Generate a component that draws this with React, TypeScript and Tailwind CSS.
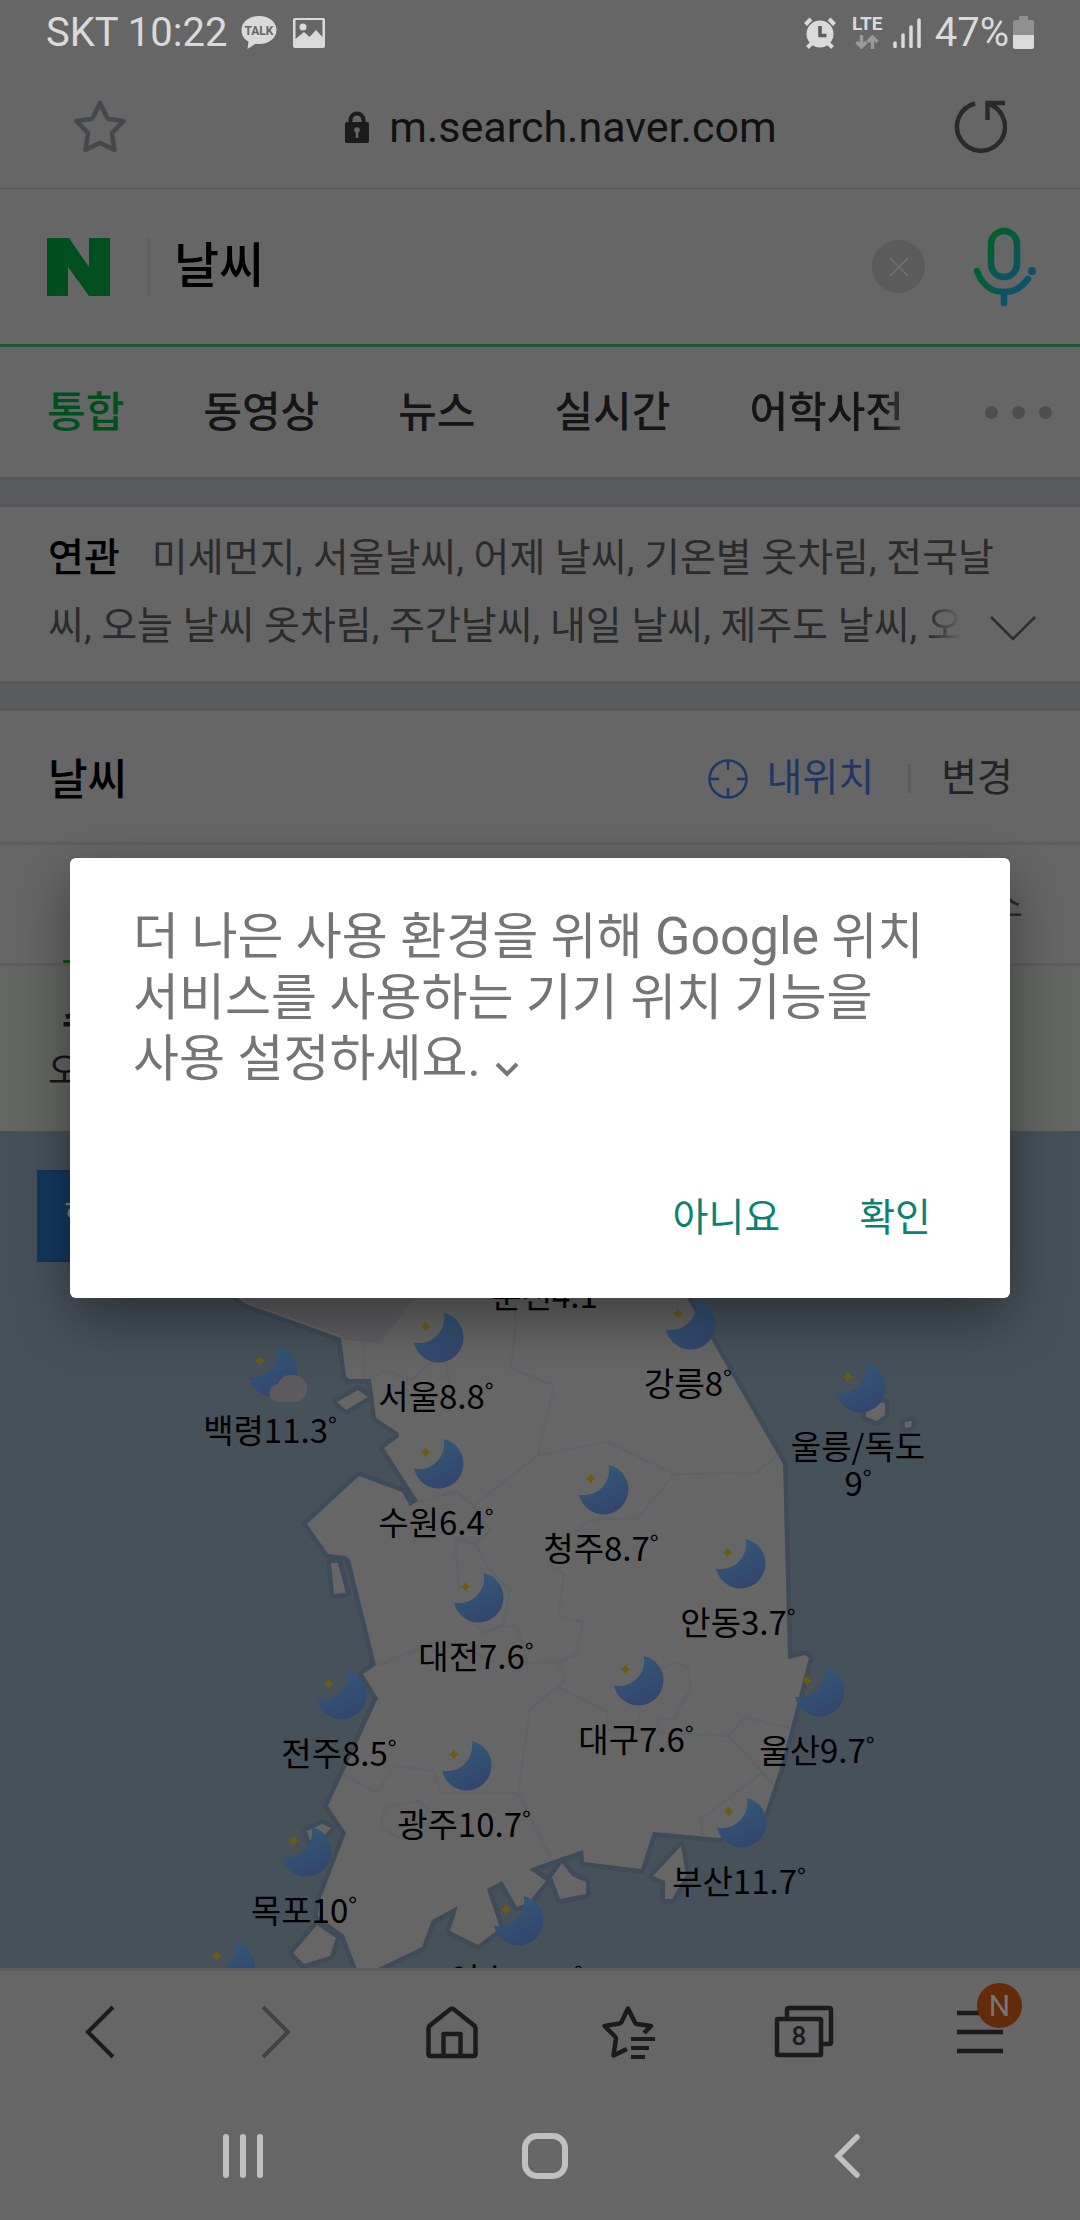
import React from "react";

type City = {
  name: string;
  temp: string;
  x: number;
  y: number;
  cloudy?: boolean;
  stacked?: boolean;
};

const MAP_TOP = 1131;

const cities: City[] = [
  { name: "춘천", temp: "4.1", x: 549, y: 1212 },
  { name: "강릉", temp: "8", x: 688, y: 1300 },
  { name: "서울", temp: "8.8", x: 436, y: 1313 },
  { name: "백령", temp: "11.3", x: 270, y: 1347, cloudy: true },
  { name: "울릉/독도", temp: "9", x: 858, y: 1363, stacked: true },
  { name: "수원", temp: "6.4", x: 436, y: 1439 },
  { name: "청주", temp: "8.7", x: 601, y: 1465 },
  { name: "안동", temp: "3.7", x: 738, y: 1539 },
  { name: "대전", temp: "7.6", x: 476, y: 1573 },
  { name: "대구", temp: "7.6", x: 636, y: 1656 },
  { name: "울산", temp: "9.7", x: 817, y: 1667 },
  { name: "전주", temp: "8.5", x: 339, y: 1670 },
  { name: "광주", temp: "10.7", x: 464, y: 1741 },
  { name: "부산", temp: "11.7", x: 739, y: 1798 },
  { name: "목포", temp: "10", x: 304, y: 1827 },
  { name: "여수", temp: "11.8", x: 516, y: 1896 },
  { name: "흑산", temp: "12", x: 227, y: 1942 },
];

function StatusBar() {
  return (
    <div className="flex h-16 items-center pl-[46px] pr-[46px] pt-px text-[40px] leading-none text-[#dadada]">
      <span>SKT 10:22</span>
      <svg className="ml-[14px] h-9 w-9" viewBox="0 0 36 36">
        <path
          d="M18 1C8 1 .5 7 .5 15c0 5.600 3 9.400 7 11.500L6.500 34l8-5.200 3.500.2c10 0 17.500-6 17.500-14S28 1 18 1z"
          fill="#dadada"
        />
        <text x="18" y="20" textAnchor="middle" fontSize="12" fontWeight="700" fill="#666666">
          TALK
        </text>
      </svg>
      <svg className="ml-4 h-[30px] w-8" viewBox="0 0 32 30">
        <path
          fillRule="evenodd"
          d="M2 0h28a2 2 0 0 1 2 2v26a2 2 0 0 1-2 2H2a2 2 0 0 1-2-2V2a2 2 0 0 1 2-2zM2.500 2v19l8.500-7 5.500 5L23 12l6.500 7V2z"
          fill="#dadada"
        />
        <circle cx="10" cy="9" r="3.500" fill="#dadada" />
      </svg>
      <div className="ml-auto flex items-center">
        <svg className="h-8 w-8" viewBox="0 0 32 32">
          <circle cx="16" cy="17" r="13.500" fill="#dadada" />
          <path d="M1.500 7.500L7 2M30.500 7.500L25 2" stroke="#dadada" strokeWidth="4" />
          <path d="M8 26l-4.500 4.500M24 26l4.500 4.500" stroke="#dadada" strokeWidth="4" />
          <path d="M16 9v9.500h6.500" stroke="#5b5b5b" strokeWidth="3.500" fill="none" />
        </svg>
        <div className="ml-4 flex w-[31px] flex-col items-center gap-1 text-[19px] font-bold leading-[15px]">
          <span>LTE</span>
          <svg className="h-[14px] w-6" viewBox="0 0 24 14">
            <path d="M6.500 0v11M1.500 7l5 5 5-5M17.500 14V3M12.500 7l5-5 5 5" stroke="#999999" strokeWidth="3.500" fill="none" />
          </svg>
        </div>
        <svg className="ml-[10px] h-[30px] w-7" viewBox="0 0 28 30">
          <path d="M2 25v3.500M10 17v11.500M18 9v19.500M26 2v26.500" stroke="#dadada" strokeWidth="3.500" strokeLinecap="round" />
        </svg>
        <span className="ml-[14px]">47%</span>
        <svg className="ml-1 h-[33px] w-[21px]" viewBox="0 0 21 33">
          <path d="M6 0h9v4h4a2 2 0 0 1 2 2v13H0V6a2 2 0 0 1 2-2h4z" fill="#8f8f8f" />
          <path d="M0 19h21v12a2 2 0 0 1-2 2H2a2 2 0 0 1-2-2z" fill="#dadada" />
        </svg>
      </div>
    </div>
  );
}

function AddressBar() {
  return (
    <div className="flex h-[125px] items-center border-b border-[#555555] px-[73px]">
      <button type="button" aria-label="즐겨찾기">
        <svg className="h-[54px] w-[54px]" viewBox="0 0 54 54" fill="none" stroke="#444848" strokeWidth="4.500" strokeLinejoin="round">
          <path d="M27 4l7 14.500c.5 1 1 1.400 2 1.600L50.500 22 40 33c-.8.800-1 1.500-.9 2.500L41.500 51 28.500 44.500c-1-.5-2-.5-3 0L12.500 51l2.400-15.500c.1-1-.1-1.700-.9-2.500L3.500 22 18 20.100c1-.2 1.500-.6 2-1.600z" />
        </svg>
      </button>
      <div className="flex flex-1 items-center justify-center gap-5 pl-[42px] pt-[2px]">
        <svg className="h-8 w-6" viewBox="0 0 24 32">
          <rect x="0" y="11" width="24" height="21" rx="2" fill="#1c1c1c" />
          <path d="M5.500 12V9a6.500 6.500 0 0 1 13 0v3" stroke="#1c1c1c" strokeWidth="4" fill="none" />
          <circle cx="12" cy="19" r="2.800" fill="#666666" />
          <path d="M12 20v7" stroke="#666666" strokeWidth="2.500" />
        </svg>
        <span className="text-[43px] leading-none text-[#111111]">m.search.naver.com</span>
      </div>
      <button type="button" aria-label="새로고침">
        <svg className="h-[54px] w-[54px]" viewBox="0 0 54 54" fill="none" stroke="#2a2a2a" strokeWidth="4.500">
          <path d="M22 4.500A24 24 0 1 0 37 5.500M34.500 21V4H52" />
        </svg>
      </button>
    </div>
  );
}

function SearchBar() {
  return (
    <form className="flex h-[158px] items-center border-b-[3px] border-[#1c5638] pl-[47px] pr-[43px]">
      <svg className="h-[58px] w-[63px] shrink-0" viewBox="0 0 63 58" role="img" aria-label="NAVER">
        <path d="M0 0h22l20 29V0h21v58H42L21 29v29H0z" fill="#00501f" />
      </svg>
      <span className="ml-[37px] h-[57px] w-[3px] shrink-0 bg-[#5f5f5f]" />
      <input
        aria-label="검색어"
        defaultValue="날씨"
        className="ml-6 min-w-0 flex-1 bg-transparent text-[49px] font-medium leading-[72px] text-black outline-none"
      />
      <button type="button" aria-label="지우기" className="flex h-[53px] w-[53px] items-center justify-center rounded-full bg-[#5b5b5b]">
        <svg className="h-5 w-5" viewBox="0 0 20 20" stroke="#6d6d6d" strokeWidth="2">
          <path d="M1 1l18 18M19 1L1 19" />
        </svg>
      </button>
      <button type="button" aria-label="음성 검색" className="ml-12">
        <svg className="h-20 w-16" viewBox="0 0 64 80" fill="none" strokeWidth="6.500" strokeLinecap="round">
          <defs>
            <linearGradient id="mic" gradientUnits="userSpaceOnUse" x1="12" y1="14" x2="48" y2="46">
              <stop offset="0" stopColor="#00602a" />
              <stop offset="1" stopColor="#0c5366" />
            </linearGradient>
            <linearGradient id="micArc" gradientUnits="userSpaceOnUse" x1="4" y1="44" x2="44" y2="60">
              <stop offset="0" stopColor="#00602f" />
              <stop offset="1" stopColor="#0c5366" />
            </linearGradient>
          </defs>
          <rect x="18" y="4" width="26" height="46" rx="13" stroke="url(#mic)" />
          <path d="M4 44C9 58 19 65 31 65c10 0 18-5 24-13" stroke="url(#micArc)" />
          <path d="M31 66v10" stroke="#0c5366" />
          <circle cx="59" cy="44" r="4" fill="#0c5366" />
        </svg>
      </button>
    </form>
  );
}

function CategoryTabs() {
  const tabs = ["동영상", "뉴스", "실시간"];
  return (
    <nav className="flex h-[130px] items-center whitespace-nowrap pl-[47px] pr-7 pt-px text-[42px] font-medium leading-[64px] text-[#151515]">
      <div className="flex flex-1 gap-[79px]">
        <a href="#all" className="text-[#00501f]">통합</a>
        {tabs.map((t) => (
          <a key={t} href={"#" + t}>{t}</a>
        ))}
        <a href="#dict" className="bg-linear-to-r from-[#151515] from-85% to-[#3a3a3a] bg-clip-text text-transparent">
          어학사전
        </a>
      </div>
      <button type="button" aria-label="더보기" className="flex gap-[14px]">
        <span className="h-[13px] w-[13px] rounded-full bg-[#4e4e50]" />
        <span className="h-[13px] w-[13px] rounded-full bg-[#4e4e50]" />
        <span className="h-[13px] w-[13px] rounded-full bg-[#4e4e50]" />
      </button>
    </nav>
  );
}

function Band() {
  return <div className="h-[30px] border-y-[3px] border-[#59595b] bg-[#5b5c5e]" />;
}

function RelatedSearches() {
  return (
    <section className="relative h-[174px] pl-[48px] pr-[60px] pt-[17px] text-[39px] leading-[68px] text-[#2b2b2b]">
      <p className="whitespace-nowrap">
        <strong className="mr-8 font-medium text-black">연관</strong>
        미세먼지, 서울날씨, 어제 날씨, 기온별 옷차림, 전국날
      </p>
      <p className="whitespace-nowrap">
        씨, 오늘 날씨 옷차림, 주간날씨, 내일 날씨, 제주도 날씨,{" "}
        <span className="bg-linear-to-r from-[#2b2b2b] to-[#666666] bg-clip-text text-transparent">오</span>
      </p>
      <button type="button" aria-label="펼치기" className="absolute bottom-10 right-11">
        <svg className="h-[26px] w-[46px]" viewBox="0 0 46 26" fill="none" stroke="#2f2f2f" strokeWidth="2.500">
          <path d="M1 2l22 22L45 2" />
        </svg>
      </button>
    </section>
  );
}

function WeatherHeader() {
  return (
    <header className="flex h-[134px] items-center border-b-[3px] border-[#5e5e5e] pl-[48px] pr-[67px] pt-1 text-[39px] leading-none">
      <h2 className="pt-1 text-[43px] font-medium text-black">날씨</h2>
      <button type="button" className="ml-auto flex items-center gap-[19px] text-[#1f3763]">
        <svg className="h-10 w-10" viewBox="0 0 40 40" fill="none" stroke="#1f3763" strokeWidth="2.500">
          <circle cx="20" cy="20" r="18.500" />
          <path d="M20 1v10M20 29v10M1 20h10M29 20h10" />
        </svg>
        내위치
      </button>
      <span className="ml-[34px] h-[29px] w-[3px] bg-[#5a5a5a]" />
      <button type="button" className="ml-[30px] text-[#222325]">변경</button>
    </header>
  );
}

function Moon({ cloudy }: { cloudy?: boolean }) {
  return (
    <svg className="h-14 w-[60px] overflow-visible" viewBox="0 0 60 56">
      <defs>
        <linearGradient id="moon" x1="0.3" y1="0" x2="0.8" y2="1">
          <stop offset="0" stopColor="#335a78" />
          <stop offset="1" stopColor="#33436c" />
        </linearGradient>
      </defs>
      <path d="M37.600 0A25 25 0 1 1 8 29.500A25 25 0 0 0 37.600 0z" fill="url(#moon)" />
      <path d="M19.700 8q1.300 4.300 5.300 5.500q-4 1.200-5.300 5.500q-1.300-4.300-5.300-5.500q4-1.200 5.300-5.500z" fill="#6c5c12" />
      {cloudy && (
        <path d="M39 55a9 9 0 0 1-1-18 13.500 13.500 0 0 1 15-9c8 0 14 6 14 13.500S61 55 54 55z" fill="#5d5b5f" />
      )}
    </svg>
  );
}

function CityPin({ city }: { city: City }) {
  return (
    <div
      className="absolute flex w-40 -translate-x-1/2 flex-col items-center whitespace-nowrap font-['Noto_Sans_CJK_KR',sans-serif] text-[33px] leading-[37px] text-black"
      style={{ left: city.x, top: city.y - MAP_TOP }}
    >
      <Moon cloudy={city.cloudy} />
      <span className="mt-2 text-center">
        {city.name}
        {city.stacked && <br />}
        {city.temp}
        <span className="align-[8px] text-[24px] leading-none">°</span>
      </span>
    </div>
  );
}

function WeatherMap() {
  return (
    <section className="relative min-h-[837px] flex-1 overflow-hidden bg-[#47515a]">
      <svg className="absolute left-0 top-0 h-[837px] w-[1080px]" viewBox="0 1131 1080 837" strokeLinejoin="round" strokeLinecap="round">
        <g fill="#666666" stroke="#3f4b57" strokeWidth="9" style={{ paintOrder: "stroke" }}>
          <path d="M200 1240L238 1298L246 1304L341 1338L346 1376L349 1379L371 1379L376 1418L399 1433L399 1437L384 1448L418 1501L410 1506L402 1492L359 1476L307 1524L328 1554L346 1556L350 1560L376 1665L363 1674L378 1698L328 1806L346 1833L319 1903L318 1916L344 1935L358 1972L370 1972L422 1947L432 1920L458 1906L450 1931L478 1945L500 1928L487 1889L502 1881L517 1907L528 1903L546 1881L529 1869L583 1850L584 1862L641 1869L653 1832L720 1838L765 1813L782 1762L809 1658L805 1655L788 1659L785 1540L783 1464L710 1337L687 1298L650 1220Z" />
          <path d="M337 1402L358 1390L368 1397L346 1410Z" />
          <path d="M331 1563L338 1563L346 1593L334 1594Z" />
          <path d="M307 1831L322 1824L331 1828L320 1840L310 1840Z" />
          <path d="M317 1925L336 1938L330 1956L304 1964L293 1953Z" />
          <path d="M866 1412L876 1402L885 1403L885 1415L877 1421L866 1417Z" />
          <path d="M905 1422L912 1421L911 1427L905 1428Z" />
          <path d="M562 1863L572 1876L586 1882L586 1894L560 1899L552 1877Z" />
          <path d="M681 1846L686 1875L672 1899L665 1899L665 1881L653 1876Z" />
        </g>
        <path d="M215 1240L240 1296L247 1302L342 1336L343 1339L375 1343L382 1341L420 1290L420 1240Z" fill="#5f5f62" />
        <g fill="none" stroke="#5e6366" strokeWidth="2">
          <path d="M364 1343V1378M371 1379L384 1370L412 1380L432 1362H446L449 1382M514 1312L516 1322L511 1368L554 1386L538 1455L473 1506L457 1492L418 1502M473 1506L490 1530L475 1544L455 1538L459 1590M475 1544L490 1570L510 1590L503 1625L483 1633L470 1618M503 1625L518 1628L528 1665M376 1666L440 1640L470 1650L500 1665L558 1662L575 1655L583 1622L558 1616L564 1574L552 1566" />
          <path d="M538 1455L608 1442L674 1474L755 1473L778 1455M674 1474L638 1518L588 1520L574 1535M558 1662L565 1680L530 1710L518 1793M344 1775L376 1792L395 1766L434 1771L441 1793H518L540 1837L551 1859M559 1688L607 1711L608 1730L728 1736L745 1717L790 1728M728 1736L773 1784M760 1774L700 1820L703 1836M640 1707L637 1731M660 1670L674 1662L688 1667L691 1687L674 1719L660 1718L652 1733" />
          <path d="M418 1801L385 1807L380 1827L398 1838L425 1832L432 1812Z" />
        </g>
      </svg>
      <button
        type="button"
        className="absolute left-[37px] top-[39px] h-[92px] w-[150px] border-[3px] border-[#13325a] bg-[#153860] pl-6 text-left text-[34px] text-[#808080]"
      >
        현재
      </button>
      {cities.map((c) => (
        <CityPin key={c.name} city={c} />
      ))}
    </section>
  );
}

function Toolbar() {
  const cell = "relative flex flex-1 items-center justify-center";
  return (
    <nav className="flex h-[129px] border-t-[3px] border-[#5c5c60] px-3 pb-[5px]">
      <button type="button" aria-label="뒤로" className={cell}>
        <svg className="h-[54px] w-[30px]" viewBox="0 0 30 54" fill="none" stroke="#1b1b1b" strokeWidth="4">
          <path d="M28 2L3 27l25 25" />
        </svg>
      </button>
      <button type="button" aria-label="앞으로" className={cell}>
        <svg className="h-[54px] w-[30px]" viewBox="0 0 30 54" fill="none" stroke="#414141" strokeWidth="4">
          <path d="M2 2l25 25L2 52" />
        </svg>
      </button>
      <button type="button" aria-label="홈" className={cell}>
        <svg className="h-[54px] w-[54px]" viewBox="0 0 54 54" fill="none" stroke="#1b1b1b" strokeWidth="4.500" strokeLinejoin="round">
          <path d="M3.500 24c0-2 .5-3 2-4L25 4.500c1.500-1 2.500-1 4 0L48.500 20c1.500 1 2 2 2 4v25c0 1.500-.5 2-2 2h-43c-1.500 0-2-.5-2-2zM18.500 51V29h17v22" />
        </svg>
      </button>
      <button type="button" aria-label="북마크" className={cell}>
        <svg className="h-[54px] w-[54px]" viewBox="0 0 54 54" fill="none" stroke="#1b1b1b" strokeWidth="4.500" strokeLinejoin="round">
          <path d="M43 28l7-7-14-2c-1-.2-1.600-.5-2-1.500L27 3.500 20.500 17c-.5 1-1 1.300-2 1.500L3.500 21 14 31.500c.8.800 1 1.500.9 2.500L12.500 50.500 26 44" />
          <path d="M30 34h24M30 43h18M30 52h14" strokeWidth="4" />
        </svg>
      </button>
      <button type="button" aria-label="탭 8개" className={cell}>
        <svg className="h-[54px] w-[60px]" viewBox="0 0 60 54" fill="none" stroke="#1b1b1b" strokeWidth="4.500" strokeLinejoin="round">
          <rect x="3" y="14" width="44" height="36" rx="1" />
          <path d="M13 13V5c0-1 .5-2 2-2h40c1.500 0 2 .5 2 2v32c0 1-.5 2-2 2h-8" />
          <text x="25" y="40" textAnchor="middle" fontSize="26" fontWeight="500" fill="#1b1b1b" stroke="none">8</text>
        </svg>
      </button>
      <button type="button" aria-label="메뉴" className={cell}>
        <svg className="h-[54px] w-[46px]" viewBox="0 0 46 54" stroke="#1b1b1b" strokeWidth="4.500">
          <path d="M0 8h46M0 27h46M0 46h46" />
        </svg>
        <span className="absolute right-[46px] top-[12px] flex h-[45px] w-[45px] items-center justify-center rounded-full bg-[#632b08] text-[30px] leading-none text-[#757575]">
          N
        </span>
      </button>
    </nav>
  );
}

function SystemNav() {
  return (
    <nav className="flex h-[123px] items-center pb-[6px] pl-[92px] pr-[82px] text-[#c0c0c0]">
      <button type="button" aria-label="최근 앱" className="flex flex-1 justify-center gap-[11px]">
        <span className="h-[44px] w-[6px] rounded-full bg-current" />
        <span className="h-[44px] w-[6px] rounded-full bg-current" />
        <span className="h-[44px] w-[6px] rounded-full bg-current" />
      </button>
      <button type="button" aria-label="홈 화면" className="flex flex-1 justify-center">
        <span className="h-[46px] w-[46px] rounded-[15px] border-[6px] border-current" />
      </button>
      <button type="button" aria-label="이전" className="flex flex-1 justify-center">
        <svg className="h-11 w-[26px]" viewBox="0 0 26 44" fill="none" stroke="currentColor" strokeWidth="5.500" strokeLinecap="round">
          <path d="M23 3L4 22l19 19" />
        </svg>
      </button>
    </nav>
  );
}

function LocationDialog() {
  return (
    <div className="absolute inset-0 flex items-center justify-center px-[70px] pb-16">
      <div
        role="alertdialog"
        aria-label="위치 설정"
        className="flex h-[440px] w-full flex-col rounded-[6px] bg-white pl-[63px] pr-[79px] pt-12 shadow-[0_20px_56px_rgba(0,0,0,0.4)]"
      >
        <p className="whitespace-nowrap text-[50px] leading-[61px] text-[#757575]">
          더 나은 사용 환경을 위해 <span className="text-[52px]">Google</span> 위치
          <br />
          서비스를 사용하는 기기 위치 기능을
          <br />
          사용 설정하세요.
          <svg className="ml-[14px] inline-block h-4 w-6 align-[-2px]" viewBox="0 0 24 16" fill="none" stroke="#757575" strokeWidth="4">
            <path d="M2 2l10 10L22 2" />
          </svg>
        </p>
        <div className="mt-auto flex justify-end gap-[79px] pb-[60px] text-[39px] leading-[40px] text-[#0c8073]">
          <button type="button">아니요</button>
          <button type="button">확인</button>
        </div>
      </div>
    </div>
  );
}

export default function App() {
  return (
    <div className="relative flex min-h-screen flex-col overflow-hidden bg-[#666666] font-[Roboto,'Noto_Sans_CJK_KR',sans-serif]">
      <StatusBar />
      <AddressBar />
      <SearchBar />
      <CategoryTabs />
      <Band />
      <RelatedSearches />
      <Band />
      <WeatherHeader />
      <div className="flex h-[121px] items-center justify-between border-b-[3px] border-[#5e5e5e] pl-[63px] pr-[57px] text-[38px] text-[#2b2b2b]">
        <a href="#nation" className="flex h-full items-center border-b-[3px] border-[#0c4f14] px-6 text-[#0c4f14]">전국</a>
        <a href="#news">뉴스</a>
      </div>
      <div className="flex h-[165px] flex-col items-start bg-[#646664] px-[48px] pt-[34px] text-[#151515]">
        <span className="w-[66px] text-center text-[42px] font-bold leading-[44px]">수</span>
        <span className="text-[36px] leading-[56px]">오늘</span>
      </div>
      <WeatherMap />
      <Toolbar />
      <SystemNav />
      <LocationDialog />
    </div>
  );
}
